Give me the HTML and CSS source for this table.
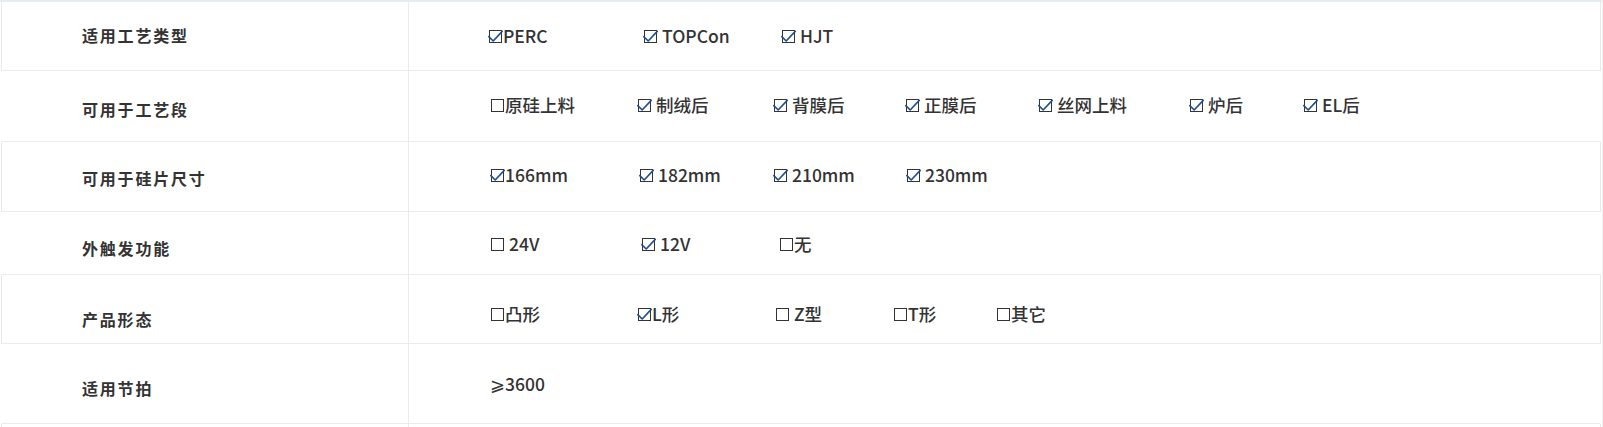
FILE: index.html
```html
<!DOCTYPE html>
<html lang="zh-CN">
<head>
<meta charset="utf-8">
<title>参数</title>
<link rel="stylesheet" href="styles.css">
</head>
<body>
<div class="page">
  <div class="topbar"></div>
  <div class="spec">
    <div class="row r1 boxed">
      <div class="label">适用工艺类型</div>
      <div class="values">
        <span class="opt"><svg class="cb" viewBox="0 0 15 15"><rect x="1.5" y="1.5" width="12" height="12"/><polyline points="0.8,7.6 5.2,12 14.2,2.4"/></svg>PERC</span>
        <span class="opt"><svg class="cb" viewBox="0 0 15 15"><rect x="1.5" y="1.5" width="12" height="12"/><polyline points="0.8,7.6 5.2,12 14.2,2.4"/></svg> TOPCon</span>
        <span class="opt"><svg class="cb" viewBox="0 0 15 15"><rect x="1.5" y="1.5" width="12" height="12"/><polyline points="0.8,7.6 5.2,12 14.2,2.4"/></svg> HJT</span>
      </div>
    </div>
    <div class="row r2">
      <div class="label">可用于工艺段</div>
      <div class="values">
        <span class="opt"><svg class="cb" viewBox="0 0 15 15"><rect x="1.5" y="1.5" width="12" height="12"/></svg>原硅上料</span>
        <span class="opt"><svg class="cb" viewBox="0 0 15 15"><rect x="1.5" y="1.5" width="12" height="12"/><polyline points="0.8,7.6 5.2,12 14.2,2.4"/></svg> 制绒后</span>
        <span class="opt"><svg class="cb" viewBox="0 0 15 15"><rect x="1.5" y="1.5" width="12" height="12"/><polyline points="0.8,7.6 5.2,12 14.2,2.4"/></svg> 背膜后</span>
        <span class="opt"><svg class="cb" viewBox="0 0 15 15"><rect x="1.5" y="1.5" width="12" height="12"/><polyline points="0.8,7.6 5.2,12 14.2,2.4"/></svg> 正膜后</span>
        <span class="opt"><svg class="cb" viewBox="0 0 15 15"><rect x="1.5" y="1.5" width="12" height="12"/><polyline points="0.8,7.6 5.2,12 14.2,2.4"/></svg> 丝网上料</span>
        <span class="opt"><svg class="cb" viewBox="0 0 15 15"><rect x="1.5" y="1.5" width="12" height="12"/><polyline points="0.8,7.6 5.2,12 14.2,2.4"/></svg> 炉后</span>
        <span class="opt"><svg class="cb" viewBox="0 0 15 15"><rect x="1.5" y="1.5" width="12" height="12"/><polyline points="0.8,7.6 5.2,12 14.2,2.4"/></svg> EL后</span>
      </div>
    </div>
    <div class="row r3 boxed">
      <div class="label">可用于硅片尺寸</div>
      <div class="values">
        <span class="opt"><svg class="cb" viewBox="0 0 15 15"><rect x="1.5" y="1.5" width="12" height="12"/><polyline points="0.8,7.6 5.2,12 14.2,2.4"/></svg>166mm</span>
        <span class="opt"><svg class="cb" viewBox="0 0 15 15"><rect x="1.5" y="1.5" width="12" height="12"/><polyline points="0.8,7.6 5.2,12 14.2,2.4"/></svg> 182mm</span>
        <span class="opt"><svg class="cb" viewBox="0 0 15 15"><rect x="1.5" y="1.5" width="12" height="12"/><polyline points="0.8,7.6 5.2,12 14.2,2.4"/></svg> 210mm</span>
        <span class="opt"><svg class="cb" viewBox="0 0 15 15"><rect x="1.5" y="1.5" width="12" height="12"/><polyline points="0.8,7.6 5.2,12 14.2,2.4"/></svg> 230mm</span>
      </div>
    </div>
    <div class="row r4">
      <div class="label">外触发功能</div>
      <div class="values">
        <span class="opt"><svg class="cb" viewBox="0 0 15 15"><rect x="1.5" y="1.5" width="12" height="12"/></svg> 24V</span>
        <span class="opt"><svg class="cb" viewBox="0 0 15 15"><rect x="1.5" y="1.5" width="12" height="12"/><polyline points="0.8,7.6 5.2,12 14.2,2.4"/></svg> 12V</span>
        <span class="opt"><svg class="cb" viewBox="0 0 15 15"><rect x="1.5" y="1.5" width="12" height="12"/></svg>无</span>
      </div>
    </div>
    <div class="row r5 boxed">
      <div class="label">产品形态</div>
      <div class="values">
        <span class="opt"><svg class="cb" viewBox="0 0 15 15"><rect x="1.5" y="1.5" width="12" height="12"/></svg>凸形</span>
        <span class="opt"><svg class="cb" viewBox="0 0 15 15"><rect x="1.5" y="1.5" width="12" height="12"/><polyline points="0.8,7.6 5.2,12 14.2,2.4"/></svg>L形</span>
        <span class="opt"><svg class="cb" viewBox="0 0 15 15"><rect x="1.5" y="1.5" width="12" height="12"/></svg> Z型</span>
        <span class="opt"><svg class="cb" viewBox="0 0 15 15"><rect x="1.5" y="1.5" width="12" height="12"/></svg>T形</span>
        <span class="opt"><svg class="cb" viewBox="0 0 15 15"><rect x="1.5" y="1.5" width="12" height="12"/></svg>其它</span>
      </div>
    </div>
    <div class="row r6">
      <div class="label">适用节拍</div>
      <div class="values">
        <span class="opt">⩾3600</span>
      </div>
    </div>
    <div class="row r7 boxed">
      <div class="label"></div>
      <div class="values"></div>
    </div>
  </div>
</div>
</body>
</html>
```
FILE: styles.css
```css
* { box-sizing: border-box; }
html, body { margin: 0; padding: 0; background: #fff; }
body {
  font-family: "Noto Sans CJK SC", "Noto Sans", sans-serif;
  color: #333;
  width: 1603px;
  height: 427px;
  overflow: hidden;
}
.page {
  width: 1603px;
  height: 427px;
  border-right: 1px solid #f1f1f1;
}
.topbar {
  height: 2px;
  background: #e6ebf2;
}
.spec {
  margin-left: 1px;
  width: 1600px;
}
.row {
  display: grid;
  grid-template-columns: 407px 1fr;
  border-left: 1px solid transparent;
  border-right: 1px solid transparent;
  border-bottom: 1px solid #ebebeb;
}
.row.boxed {
  border-left-color: #e8e8e8;
  border-right-color: #e8e8e8;
}
.label {
  border-right: 1px solid #ebebeb;
  padding-left: 80px;
  font-size: 16px;
  line-height: 20px;
  font-weight: 700;
  letter-spacing: 1.8px;
  color: #333;
}
.values {
  display: grid;
  justify-content: start;
  padding-left: 81px;
  font-size: 17.5px;
  line-height: 20px;
  font-weight: 500;
  color: #333;
  white-space: pre;
}
.opt { white-space: pre; }
.cb {
  width: 15px;
  height: 15px;
  vertical-align: -1px;
  margin-right: 0;
}
.cb rect { fill: none; stroke: #333; stroke-width: 1; }
.cb polyline { fill: none; stroke: #1d4e8f; stroke-width: 1.6; stroke-linecap: round; stroke-linejoin: round; }

.r1 { height: 69px; }
.r1 .label { padding-top: 23px; }
.r1 .values { padding-top: 24px; padding-left: 79px; grid-template-columns: 155px 138px auto; }

.r2 { height: 71px; }
.r2 .label { padding-top: 28px; }
.r2 .values { padding-top: 24px; grid-template-columns: 147px 136px 132px 133px 151px 114px auto; }

.r3 { height: 70px; }
.r3 .label { padding-top: 26px; }
.r3 .values { padding-top: 23px; grid-template-columns: 149px 134px 133px auto; }

.r4 { height: 63px; }
.r4 .label { padding-top: 26px; }
.r4 .values { padding-top: 22px; grid-template-columns: 151px 138px auto; }

.r5 { height: 69px; }
.r5 .label { padding-top: 34px; }
.r5 .values { padding-top: 29px; grid-template-columns: 147px 138px 118px 103px auto; }

.r6 { height: 80px; }
.r6 .label { padding-top: 34px; }
.r6 .values { padding-top: 30px; }

.r7 { height: 20px; border-bottom: 0; }
```
